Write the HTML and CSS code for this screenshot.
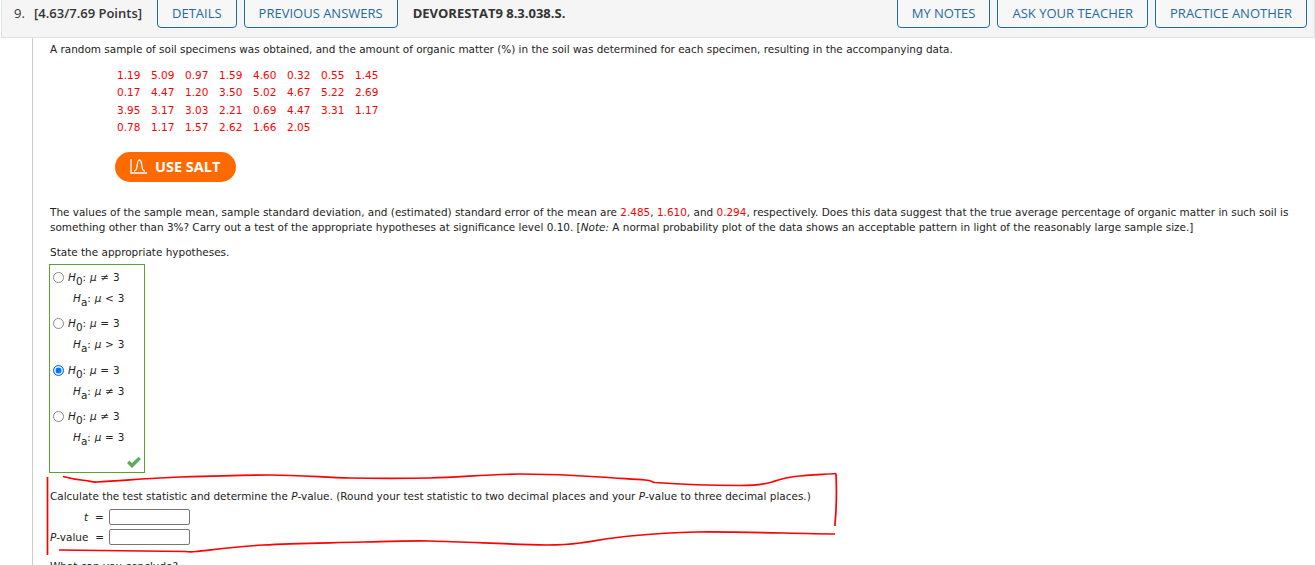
FILE: index.html
```html
<!DOCTYPE html>
<html lang="en">
<head>
    <meta charset="UTF-8">
    <meta name="viewport" content="width=device-width, initial-scale=1.0">
    <title>Question 9</title>
    <link rel="stylesheet" href="styles.css">
</head>
<body>
    <header class="question-bar">
        <span class="question-num">9.</span>
        <span class="question-points">[4.63/7.69 Points]</span>
        <a class="bar-button">DETAILS</a>
        <a class="bar-button">PREVIOUS ANSWERS</a>
        <span class="question-code">DEVORESTAT9 8.3.038.S.</span>
        <a class="bar-button push-right">MY NOTES</a>
        <a class="bar-button">ASK YOUR TEACHER</a>
        <a class="bar-button">PRACTICE ANOTHER</a>
    </header>

    <main class="question-body">
        <p class="intro">A random sample of soil specimens was obtained, and the amount of organic matter (%) in the soil was determined for each specimen, resulting in the accompanying data.</p>

        <div class="data-table">
            <span>1.19</span><span>5.09</span><span>0.97</span><span>1.59</span><span>4.60</span><span>0.32</span><span>0.55</span><span>1.45</span>
            <span>0.17</span><span>4.47</span><span>1.20</span><span>3.50</span><span>5.02</span><span>4.67</span><span>5.22</span><span>2.69</span>
            <span>3.95</span><span>3.17</span><span>3.03</span><span>2.21</span><span>0.69</span><span>4.47</span><span>3.31</span><span>1.17</span>
            <span>0.78</span><span>1.17</span><span>1.57</span><span>2.62</span><span>1.66</span><span>2.05</span>
        </div>

        <a class="salt-button">
            <svg width="17" height="15" viewBox="0 0 17 15" fill="none" stroke="#fff" stroke-width="1.3">
                <path d="M1 0v14h16"/>
                <path d="M4 12c2 0 2.500-1 3-4.500C7.500 3 8 1 9.500 1s2 2 2.500 6.500c.4 3.500 1 4.500 3 4.500"/>
            </svg>
            USE SALT
        </a>

        <p class="values">The values of the sample mean, sample standard deviation, and (estimated) standard error of the mean are <span class="red">2.485</span>, <span class="red">1.610</span>, and <span class="red">0.294</span>, respectively. Does this data suggest that the true average percentage of organic matter in such soil is something other than 3%? Carry out a test of the appropriate hypotheses at significance level 0.10. [<em>Note:</em> A normal probability plot of the data shows an acceptable pattern in light of the reasonably large sample size.]</p>

        <p class="state">State the appropriate hypotheses.</p>

        <div class="answer-box">
            <div class="choice">
                <span class="radio"></span>
                <div class="hyp"><em>H</em><sub>0</sub>: <em>μ</em> ≠ 3</div>
                <div class="hyp alt"><em>H</em><sub>a</sub>: <em>μ</em> &lt; 3</div>
            </div>
            <div class="choice">
                <span class="radio"></span>
                <div class="hyp"><em>H</em><sub>0</sub>: <em>μ</em> = 3</div>
                <div class="hyp alt"><em>H</em><sub>a</sub>: <em>μ</em> &gt; 3</div>
            </div>
            <div class="choice">
                <span class="radio checked"></span>
                <div class="hyp"><em>H</em><sub>0</sub>: <em>μ</em> = 3</div>
                <div class="hyp alt"><em>H</em><sub>a</sub>: <em>μ</em> ≠ 3</div>
            </div>
            <div class="choice">
                <span class="radio"></span>
                <div class="hyp"><em>H</em><sub>0</sub>: <em>μ</em> ≠ 3</div>
                <div class="hyp alt"><em>H</em><sub>a</sub>: <em>μ</em> = 3</div>
            </div>
            <svg class="check" width="14" height="11" viewBox="0 0 14 11">
                <path d="M0 6l2.500-2.500L5 6l6.500-6L14 2 5 11z" fill="#5cab5c"/>
            </svg>
        </div>

        <p class="calc">Calculate the test statistic and determine the <em>P</em>-value. (Round your test statistic to two decimal places and your <em>P</em>-value to three decimal places.)</p>

        <div class="field-row first-field">
            <label class="field-name"><em>t</em></label>
            <span class="field-eq">=</span>
            <input class="field-input" type="text">
        </div>
        <div class="field-row">
            <label class="field-name"><em>P</em>-value</label>
            <span class="field-eq">=</span>
            <input class="field-input" type="text">
        </div>

        <p class="conclude">What can you conclude?</p>
    </main>

    <!-- hand drawn red marks on top of the page -->
    <svg class="scribble" width="1315" height="565" viewBox="0 0 1315 565" fill="none" stroke="#f00" stroke-width="1.700">
        <path d="M47.500 477v78"/>
        <path d="M63 476.500C72 479 80 480 85 480.500S93 482.500 97 482C120 481 150 478 180 477S240 475 270 475C300 475 325 477.500 350 478S405 478.500 430 478C460 477 490 474.500 520 474C550 474 580 475.500 600 477S635 479 645 480S650 482 655 482.500C675 484 710 485.500 740 485.500C755 485.500 765 484 772 482C778 480 785 477.500 795 476.500C808 475 822 474.500 836 473.500"/>
        <path d="M836 473.500C836.500 485 836.500 500 836 510S835 520 835 526"/>
        <path d="M59 550L185 551.500C189 552 192 552 196 551.500C215 549.500 240 546.500 263 545C296 543 330 543 363 542C385 541.500 408 540.500 430 541C470 542 510 544.500 547 545C558 545 569 544.500 580 543C597 540.500 613 537.500 630 536C652 534 675 532.500 697 532C743 531.500 789 533.500 835 534"/>
    </svg>
</body>
</html>
```

FILE: styles.css
```css
html, body {
    height: 565px;
    overflow: hidden;
}
body {
    font-family: 'DejaVu Sans', Verdana, sans-serif;
    font-size: 10.460px;
    color: #222;
    background-color: #fff;
    margin: 0;
    padding: 0;
    position: relative;
}
.question-bar {
    display: flex;
    align-items: flex-start;
    height: 37px;
    margin-left: 1px;
    background-color: #f5f5f5;
    border: 1px solid #e2e2e2;
    border-top: none;
    font-family: 'Open Sans', sans-serif;
    font-size: 13px;
    color: #333;
}
.question-num {
    margin: 4px 0 0 12px;
    width: 20px;
}
.question-points {
    margin-top: 4px;
    font-weight: 600;
    width: 123px;
}
.bar-button {
    display: block;
    box-sizing: border-box;
    height: 29px;
    padding: 4px 14px 0;
    margin-top: -1px;
    margin-right: 7px;
    color: #1f6a9e;
    background-color: #f7f7f7;
    border: 1px solid #1f6a9e;
    border-radius: 0 0 4px 4px;
}
.question-code {
    margin: 4px 0 0 8px;
    font-weight: 700;
    color: #333;
}
.push-right {
    margin-left: auto;
}
.question-body {
    margin-left: 32px;
    padding: 4px 18px 0 17px;
    height: 600px;
    border-left: 1px solid #ccc;
}
.question-body p {
    margin: 0;
}
.intro {
    line-height: 14px;
}
.data-table {
    display: grid;
    grid-template-columns: repeat(8, 34px);
    grid-auto-rows: 17.500px;
    align-items: center;
    margin: 10px 0 0 67px;
    color: #f00;
    font-size: 10.500px;
}
.salt-button {
    display: inline-flex;
    align-items: center;
    gap: 8px;
    box-sizing: border-box;
    width: 121px;
    height: 30px;
    margin: 16px 0 0 65px;
    padding: 0 0 1px 15px;
    background-color: #ff6a00;
    border-radius: 15px;
    color: #fff;
    font-family: 'Open Sans', sans-serif;
    font-size: 14.500px;
    font-weight: 700;
}
.question-body .values {
    margin-top: 23px;
    line-height: 15px;
}
.red {
    color: #f00;
}
.question-body .state {
    margin-top: 10px;
    line-height: 14px;
}
.answer-box {
    position: relative;
    box-sizing: border-box;
    width: 96px;
    height: 209px;
    margin: 5px 0 0 -1px;
    padding: 4px 0 0 3px;
    border: 1px solid #5f9e35;
}
.choice {
    position: relative;
    height: 46.400px;
    padding-left: 15px;
}
.radio {
    position: absolute;
    left: 0;
    top: 3px;
    box-sizing: border-box;
    width: 11px;
    height: 11px;
    border: 1px solid #8a8a8a;
    border-radius: 50%;
    background-color: #fff;
}
.radio.checked {
    border: 1.500px solid #0075ff;
    box-shadow: inset 0 0 0 1.500px #fff;
    background-color: #0075ff;
}
.hyp {
    height: 21px;
    line-height: 17px;
    white-space: nowrap;
    word-spacing: 0.500px;
}
.hyp sub {
    font-size: 10.450px;
    line-height: 0;
    vertical-align: -4px;
}
.hyp.alt {
    padding-left: 5px;
}
.check {
    position: absolute;
    right: 3px;
    bottom: 4px;
}
.question-body .calc {
    margin-top: 16px;
    line-height: 14px;
}
.field-row {
    display: flex;
    align-items: center;
    height: 20px;
}
.first-field {
    margin-top: 4px;
}
.field-name {
    flex: 0 0 38px;
    text-align: right;
    white-space: nowrap;
}
.field-eq {
    flex: 0 0 21px;
    padding-left: 7px;
    box-sizing: border-box;
}
.field-input {
    box-sizing: border-box;
    width: 81px;
    height: 16px;
    padding: 0;
    border: 1px solid #767676;
    border-radius: 2px;
    background-color: #fff;
}
.question-body .conclude {
    margin-top: 12px;
    line-height: 14px;
}
.scribble {
    position: absolute;
    left: 0;
    top: 0;
    pointer-events: none;
}
```
